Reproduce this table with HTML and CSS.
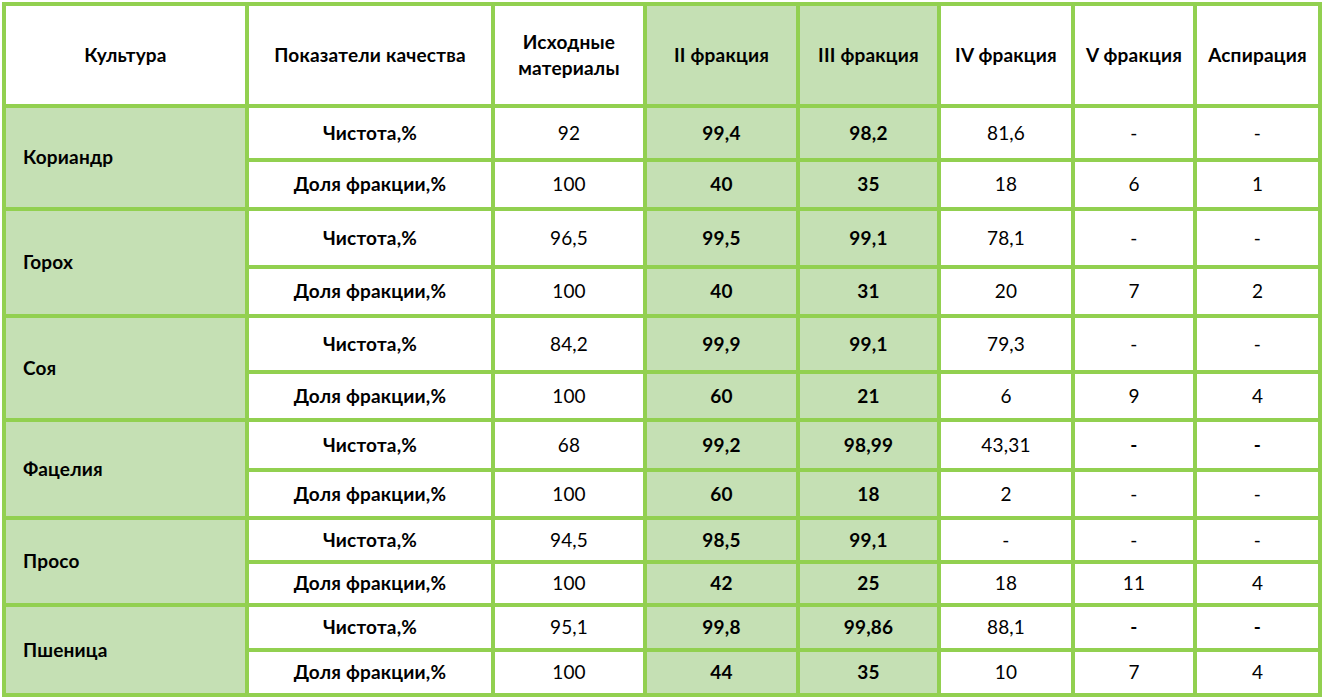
FILE: index.html
```html
<!DOCTYPE html>
<html lang="ru">
<head>
<meta charset="utf-8">
<title>Фракции</title>
<link rel="stylesheet" href="styles.css">
</head>
<body>
<table class="grid">
  <colgroup>
    <col class="c1"><col class="c2"><col class="c3"><col class="c4"><col class="c5"><col class="c6"><col class="c7"><col class="c8">
  </colgroup>
  <thead>
    <tr class="h">
      <th>Культура</th>
      <th>Показатели качества</th>
      <th class="wrap">Исходные<br>материалы</th>
      <th class="g">II фракция</th>
      <th class="g">III фракция</th>
      <th>IV фракция</th>
      <th>V фракция</th>
      <th>Аспирация</th>
    </tr>
  </thead>
  <tbody>
    <tr class="r1"><td class="crop" rowspan="2">Кориандр</td><td class="b">Чистота,%</td><td>92</td><td class="g b">99,4</td><td class="g b">98,2</td><td>81,6</td><td>-</td><td>-</td></tr>
    <tr class="r2"><td class="b">Доля фракции,%</td><td>100</td><td class="g b">40</td><td class="g b">35</td><td>18</td><td>6</td><td>1</td></tr>
    <tr class="r3"><td class="crop" rowspan="2">Горох</td><td class="b">Чистота,%</td><td>96,5</td><td class="g b">99,5</td><td class="g b">99,1</td><td>78,1</td><td>-</td><td>-</td></tr>
    <tr class="r4"><td class="b">Доля фракции,%</td><td>100</td><td class="g b">40</td><td class="g b">31</td><td>20</td><td>7</td><td>2</td></tr>
    <tr class="r5"><td class="crop" rowspan="2">Соя</td><td class="b">Чистота,%</td><td>84,2</td><td class="g b">99,9</td><td class="g b">99,1</td><td>79,3</td><td>-</td><td>-</td></tr>
    <tr class="r6"><td class="b">Доля фракции,%</td><td>100</td><td class="g b">60</td><td class="g b">21</td><td>6</td><td>9</td><td>4</td></tr>
    <tr class="r7"><td class="crop" rowspan="2">Фацелия</td><td class="b">Чистота,%</td><td>68</td><td class="g b">99,2</td><td class="g b">98,99</td><td>43,31</td><td class="b">-</td><td class="b">-</td></tr>
    <tr class="r8"><td class="b">Доля фракции,%</td><td>100</td><td class="g b">60</td><td class="g b">18</td><td>2</td><td>-</td><td>-</td></tr>
    <tr class="r9"><td class="crop" rowspan="2">Просо</td><td class="b">Чистота,%</td><td>94,5</td><td class="g b">98,5</td><td class="g b">99,1</td><td>-</td><td>-</td><td>-</td></tr>
    <tr class="r10"><td class="b">Доля фракции,%</td><td>100</td><td class="g b">42</td><td class="g b">25</td><td>18</td><td>11</td><td>4</td></tr>
    <tr class="r11"><td class="crop" rowspan="2">Пшеница</td><td class="b">Чистота,%</td><td>95,1</td><td class="g b">99,8</td><td class="g b">99,86</td><td>88,1</td><td class="b">-</td><td class="b">-</td></tr>
    <tr class="r12"><td class="b">Доля фракции,%</td><td>100</td><td class="g b">44</td><td class="g b">35</td><td>10</td><td>7</td><td>4</td></tr>
  </tbody>
</table>
</body>
</html>
```
FILE: styles.css
```css
html, body {
  margin: 0;
  padding: 0;
  background: #ffffff;
}

body {
  font-family: Lato, "Open Sans", "Noto Sans", sans-serif;
  font-size: 19px;
  letter-spacing: 0.2px;
  color: #000;
}

.grid {
  margin: 2px 0 0 2px;
  border-collapse: separate;
  border-spacing: 0;
  table-layout: fixed;
  width: 1320px;
  border-left: 4px solid #92d050;
  border-top: 4px solid #92d050;
}

.c1 { width: 243px; }
.c2 { width: 246px; }
.c3 { width: 152px; }
.c4 { width: 153px; }
.c5 { width: 141px; }
.c6 { width: 134px; }
.c7 { width: 122px; }
.c8 { width: 125px; }

.grid th,
.grid td {
  box-sizing: border-box;
  padding: 0;
  border-right: 4px solid #92d050;
  border-bottom: 4px solid #92d050;
  text-align: center;
  vertical-align: middle;
  font-weight: 400;
  line-height: 1.2;
  white-space: nowrap;
}

.grid th {
  font-weight: 700;
}

.grid th.wrap {
  line-height: 26px;
}

.grid .g {
  background: #c5e0b4;
}

.grid .b {
  font-weight: 700;
}

.grid td.crop {
  background: #c5e0b4;
  text-align: left;
  padding-left: 17px;
  font-weight: 700;
}

.h { height: 102px; }
.r1 { height: 54px; }
.r2 { height: 49px; }
.r3 { height: 58px; }
.r4 { height: 49px; }
.r5 { height: 56px; }
.r6 { height: 48px; }
.r7 { height: 50px; }
.r8 { height: 48px; }
.r9 { height: 44px; }
.r10 { height: 43px; }
.r11 { height: 45px; }
.r12 { height: 45px; }
```
